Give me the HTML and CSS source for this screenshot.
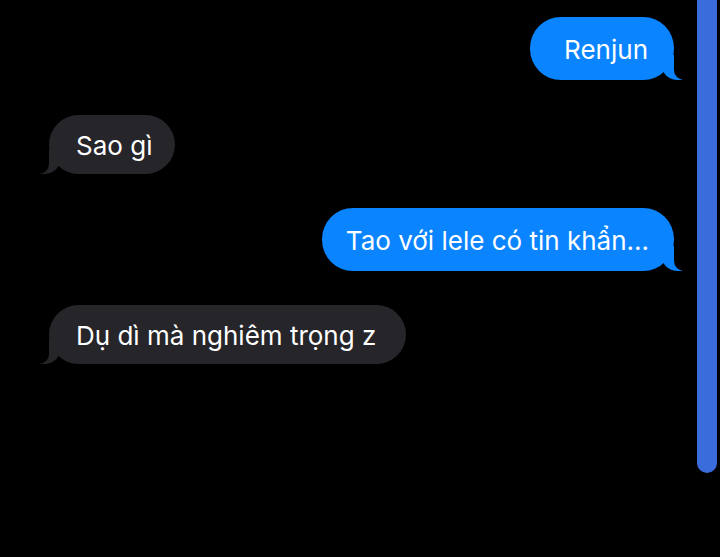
FILE: index.html
```html
<!DOCTYPE html>
<html lang="vi">
<head>
<meta charset="utf-8">
<link rel="stylesheet" href="styles.css">
</head>
<body>
<div class="screen">
  <div class="chat">
    <div class="bubble sent b1">Renjun</div>
    <div class="bubble recv b2">Sao gì</div>
    <div class="bubble sent b3">Tao với lele có tin khẩn...</div>
    <div class="bubble recv b4">Dụ dì mà nghiêm trọng z</div>
  </div>
  <div class="track"><div class="thumb"></div></div>
</div>
</body>
</html>
```
FILE: styles.css
```css
html, body {
  margin: 0;
  padding: 0;
  background: #000;
}
.screen {
  display: flex;
  width: 720px;
  height: 557px;
  overflow: hidden;
}
.chat {
  flex: 1;
  display: flex;
  flex-direction: column;
  padding-top: 17px;
  font-family: Inter, "Noto Sans", sans-serif;
  font-size: 26px;
  color: #fff;
}
.bubble {
  position: relative;
  box-sizing: border-box;
  display: flex;
  align-items: center;
  padding: 1px 26px 0 27px;
  border-radius: 31px;
  white-space: nowrap;
}
.sent {
  align-self: flex-end;
  margin-right: 23px;
  background: #0a84ff;
  height: 63px;
}
.b1 { padding-left: 34px; }
.b2 { padding-right: 23px; }
.b3 { padding-left: 24px; padding-right: 25px; }
.b4 { padding-right: 30px; }
.recv {
  align-self: flex-start;
  margin-left: 49px;
  background: #262529;
  height: 59px;
}
.b2 { margin-top: 35px; }
.b3 { margin-top: 34px; }
.b4 { margin-top: 34px; }

.bubble::before,
.bubble::after {
  content: "";
  position: absolute;
  bottom: 0;
  height: 25px;
}
.sent::before {
  right: -8px;
  width: 20px;
  background: #0a84ff;
  border-bottom-left-radius: 16px 14px;
}
.sent::after {
  right: -12px;
  width: 12px;
  background: #000;
  border-bottom-left-radius: 10px;
}
.recv::before {
  left: -9px;
  width: 20px;
  background: #262529;
  border-bottom-right-radius: 16px 14px;
}
.recv::after {
  left: -13px;
  width: 13px;
  background: #000;
  border-bottom-right-radius: 10px;
}
.track {
  width: 20px;
  margin-right: 3px;
}
.thumb {
  width: 20px;
  height: 473px;
  background: #3b6cdc;
  border-radius: 0 0 10px 10px;
}
```
